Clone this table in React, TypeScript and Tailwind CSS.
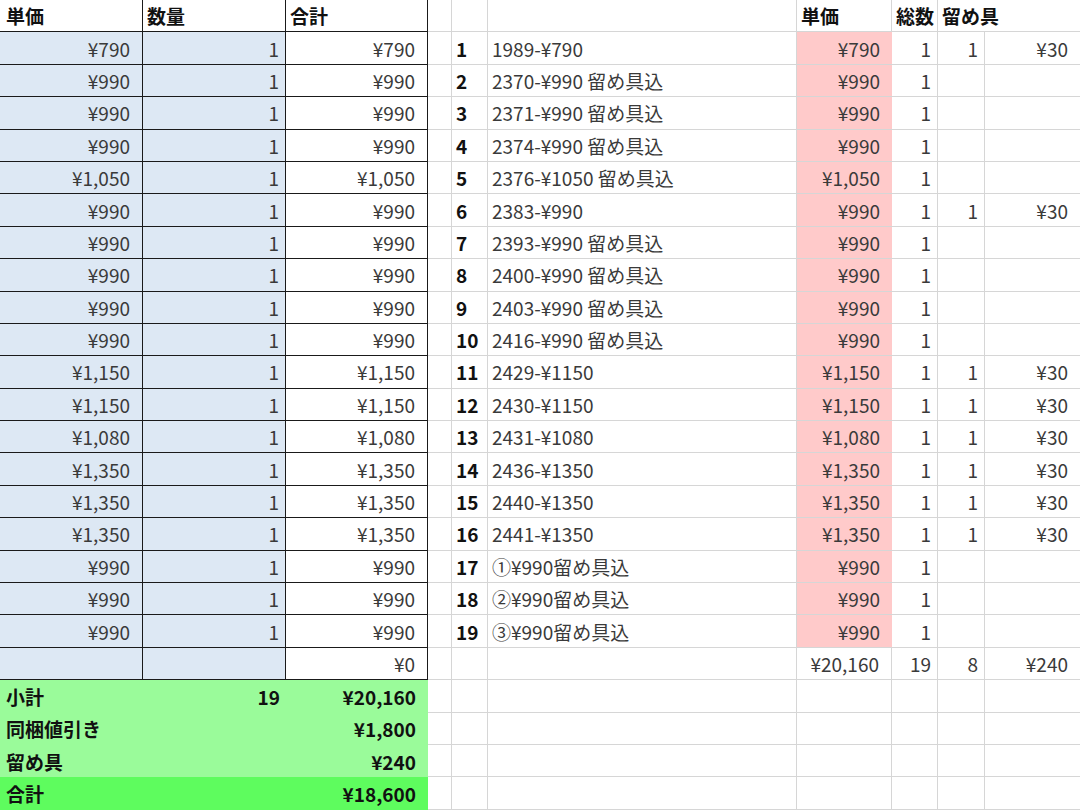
import React from 'react';

const prices = [790, 990, 990, 990, 1050, 990, 990, 990, 990, 990, 1150, 1150, 1080, 1350, 1350, 1350, 990, 990, 990];

const names = [
  '1989-¥790',
  '2370-¥990 留め具込',
  '2371-¥990 留め具込',
  '2374-¥990 留め具込',
  '2376-¥1050 留め具込',
  '2383-¥990',
  '2393-¥990 留め具込',
  '2400-¥990 留め具込',
  '2403-¥990 留め具込',
  '2416-¥990 留め具込',
  '2429-¥1150',
  '2430-¥1150',
  '2431-¥1080',
  '2436-¥1350',
  '2440-¥1350',
  '2441-¥1350',
  '①¥990留め具込',
  '②¥990留め具込',
  '③¥990留め具込',
];

// rows that carry a fastener (留め具 ¥30)
const withClip = [0, 5, 10, 11, 12, 13, 14, 15];

const yen = (n: number) => '¥' + n.toLocaleString('en-US');

const base = 'flex items-center whitespace-nowrap overflow-visible';
const blk = 'border-r border-b border-[#1a1a1a]';
const gry = 'border-r border-b border-[#d6d6d6]';
const gryB = 'border-b border-[#d6d6d6]';

const App = () => {
  const subtotal = prices.reduce((a, b) => a + b, 0);

  const rightCells = (i: number) => {
    // i = row index in sheet (0 = header)
    if (i === 0) {
      return (
        <>
          <div className={`${base} ${gry}`} />
          <div className={`${base} ${gry}`} />
          <div className={`${base} ${gry}`} />
          <div className={`${base} ${gry} pl-1 font-bold text-[#111]`}>単価</div>
          <div className={`${base} ${gry} pl-1 font-bold text-[#111]`}>総数</div>
          <div className={`${base} ${gryB} col-span-2 pl-1 font-bold text-[#111]`}>留め具</div>
        </>
      );
    }
    const k = i - 1;
    if (k < 19) {
      const clip = withClip.includes(k);
      return (
        <>
          <div className={`${base} ${gry}`} />
          <div className={`${base} ${gry} pl-1 font-bold text-[#111]`}>{k + 1}</div>
          <div className={`${base} ${gry} pl-1`}>{names[k]}</div>
          <div className={`${base} border-b border-[#d6d6d6] bg-[#ffcaca] justify-end pr-3`}>{yen(prices[k])}</div>
          <div className={`${base} ${gry} justify-end pr-1.5`}>1</div>
          <div className={`${base} ${gry} justify-end pr-1.5`}>{clip ? 1 : ''}</div>
          <div className={`${base} ${gryB} justify-end pr-3`}>{clip ? '¥30' : ''}</div>
        </>
      );
    }
    if (k === 19) {
      return (
        <>
          <div className={`${base} ${gry}`} />
          <div className={`${base} ${gry}`} />
          <div className={`${base} ${gry}`} />
          <div className={`${base} ${gry} justify-end pr-3`}>{yen(subtotal)}</div>
          <div className={`${base} ${gry} justify-end pr-1.5`}>19</div>
          <div className={`${base} ${gry} justify-end pr-1.5`}>8</div>
          <div className={`${base} ${gryB} justify-end pr-3`}>¥240</div>
        </>
      );
    }
    return (
      <>
        <div className={`${base} ${gry}`} />
        <div className={`${base} ${gry}`} />
        <div className={`${base} ${gry}`} />
        <div className={`${base} ${gry}`} />
        <div className={`${base} ${gry}`} />
        <div className={`${base} ${gry}`} />
        <div className={`${base} ${gryB}`} />
      </>
    );
  };

  const leftCells = (i: number) => {
    if (i === 0) {
      return (
        <>
          <div className={`${base} ${blk} pl-1.5 font-bold text-[#111]`}>単価</div>
          <div className={`${base} ${blk} pl-1 font-bold text-[#111]`}>数量</div>
          <div className={`${base} ${blk} pl-1 font-bold text-[#111]`}>合計</div>
        </>
      );
    }
    const k = i - 1;
    if (k < 19) {
      return (
        <>
          <div className={`${base} ${blk} bg-[#dde8f4] justify-end pr-3`}>{yen(prices[k])}</div>
          <div className={`${base} ${blk} bg-[#dde8f4] justify-end pr-1.5`}>1</div>
          <div className={`${base} ${blk} justify-end pr-3`}>{yen(prices[k])}</div>
        </>
      );
    }
    if (k === 19) {
      return (
        <>
          <div className={`${base} ${blk} bg-[#dde8f4]`} />
          <div className={`${base} ${blk} bg-[#dde8f4]`} />
          <div className={`${base} ${blk} justify-end pr-3`}>¥0</div>
        </>
      );
    }
    const green = [
      ['小計', '19', yen(subtotal)],
      ['同梱値引き', '', '¥1,800'],
      ['留め具', '', '¥240'],
      ['合計', '', '¥18,600'],
    ][k - 20];
    const bg = k === 23 ? 'bg-[#5efc5e]' : 'bg-[#9afb9a]';
    return (
      <>
        <div className={`${base} ${bg} pl-1.5 font-bold text-[#111]`}>{green[0]}</div>
        <div className={`${base} ${bg} justify-end pr-1.5 font-bold text-[#111]`}>{green[1]}</div>
        <div className={`${base} ${bg} justify-end pr-3 font-bold text-[#111]`}>{green[2]}</div>
      </>
    );
  };

  return (
    <div className="w-[1080px] h-[811px] bg-white overflow-hidden text-[19px] text-[#3a3a3a] font-['Noto_Sans_CJK_JP',sans-serif] leading-none">
      <div className="grid grid-cols-[143px_143px_142px_24px_36px_309px_95px_46px_47px_95px] auto-rows-[32.4px]">
        {Array.from({ length: 25 }).map((_, i) => (
          <React.Fragment key={i}>
            {leftCells(i)}
            {rightCells(i)}
          </React.Fragment>
        ))}
      </div>
    </div>
  );
};

export default App;
